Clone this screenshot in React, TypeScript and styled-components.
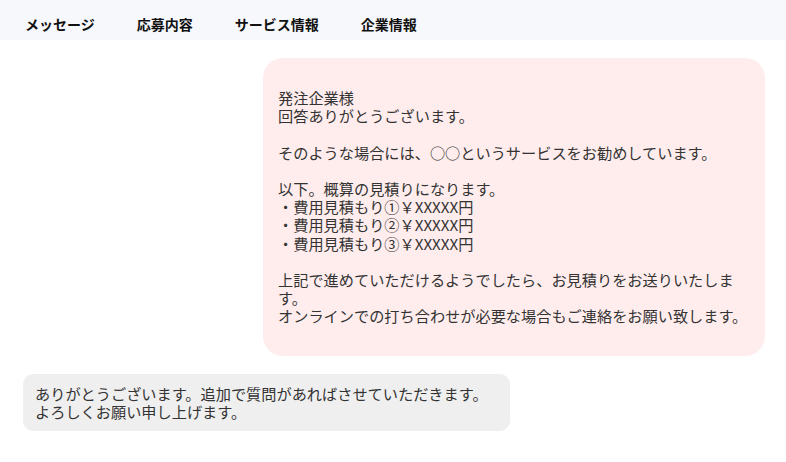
import React from 'react'
import styled, { createGlobalStyle } from 'styled-components'

const GlobalStyle = createGlobalStyle`
  body {
    margin: 0;
    background: #ffffff;
    font-family: 'Noto Sans CJK JP', 'Noto Sans', sans-serif;
    color: #333333;
  }
`

const tabs = ['メッセージ', '応募内容', 'サービス情報', '企業情報']

const replyLines = [
  '発注企業様',
  '回答ありがとうございます。',
  '',
  'そのような場合には、○○というサービスをお勧めしています。',
  '',
  '以下。概算の見積りになります。',
  '・費用見積もり①￥XXXXX円',
  '・費用見積もり②￥XXXXX円',
  '・費用見積もり③￥XXXXX円',
  '',
  '上記で進めていただけるようでしたら、お見積りをお送りいたします。',
  'オンラインでの打ち合わせが必要な場合もご連絡をお願い致します。',
]

const App: React.FC = () => (
  <>
    <GlobalStyle />
    <Header>
      {tabs.map(tab => (
        <Tab key={tab}>{tab}</Tab>
      ))}
    </Header>
    <Thread>
      <Row $mine>
        <Bubble $mine>{replyLines.join('\n')}</Bubble>
      </Row>
      <Row>
        <Bubble>
          {'ありがとうございます。追加で質問があればさせていただきます。\nよろしくお願い申し上げます。'}
        </Bubble>
      </Row>
    </Thread>
  </>
)

export default App

const Header = styled.nav`
  display: flex;
  align-items: center;
  height: 40px;
  padding: 8px 0 0 4px;
  box-sizing: border-box;
  background: #f7f8fc;
`

const Tab = styled.div`
  padding: 0 21px;
  font-size: 14px;
  font-weight: 700;
  line-height: 20px;
  color: #111111;
  white-space: nowrap;
`

const Thread = styled.div`
  display: flex;
  flex-direction: column;
  gap: 18px;
  padding: 18px 21px 0 23px;
`

const Row = styled.div<{ $mine?: boolean }>`
  display: flex;
  justify-content: ${p => (p.$mine ? 'flex-end' : 'flex-start')};
`

const Bubble = styled.div<{ $mine?: boolean }>`
  white-space: pre-wrap;
  font-size: 15.2px;
  line-height: 18.2px;
  color: #333333;
  box-sizing: border-box;
  ${p =>
    p.$mine
      ? `
    width: 502px;
    padding: 30px 15px 31px 15px;
    background: #ffeded;
    border-radius: 20px;
  `
      : `
    padding: 10px 22px 11px 12px;
    background: #efefef;
    border-radius: 10px;
  `}
`
